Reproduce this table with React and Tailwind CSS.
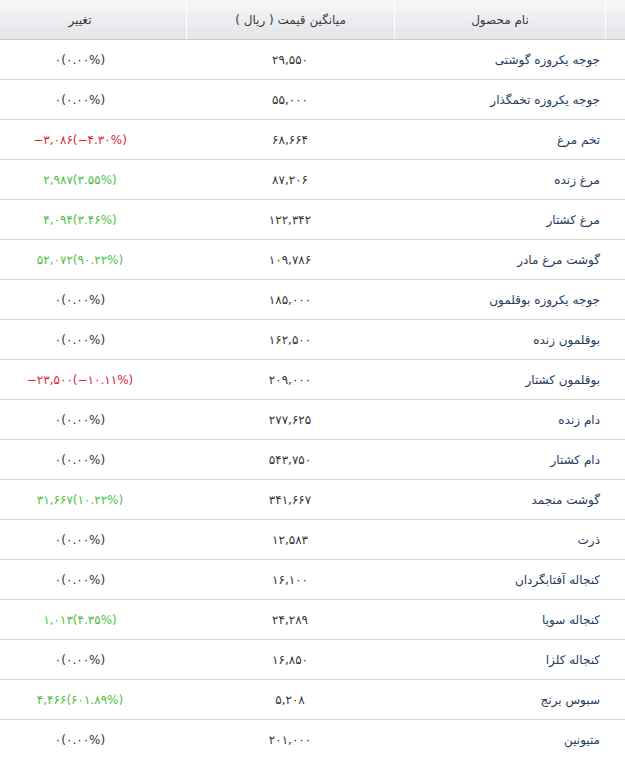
import React from 'react';

const rows = [
  ['جوجه یکروزه گوشتی', '۲۹,۵۵۰', '۰(۰.۰۰%)', 0],
  ['جوجه یکروزه تخمگذار', '۵۵,۰۰۰', '۰(۰.۰۰%)', 0],
  ['تخم مرغ', '۶۸,۶۶۴', '−۳,۰۸۶(−۴.۳۰%)', -1],
  ['مرغ زنده', '۸۷,۲۰۶', '۲,۹۸۷(۳.۵۵%)', 1],
  ['مرغ کشتار', '۱۲۲,۳۴۲', '۴,۰۹۴(۳.۴۶%)', 1],
  ['گوشت مرغ مادر', '۱۰۹,۷۸۶', '۵۲,۰۷۲(۹۰.۲۲%)', 1],
  ['جوجه یکروزه بوقلمون', '۱۸۵,۰۰۰', '۰(۰.۰۰%)', 0],
  ['بوقلمون زنده', '۱۶۲,۵۰۰', '۰(۰.۰۰%)', 0],
  ['بوقلمون کشتار', '۲۰۹,۰۰۰', '−۲۳,۵۰۰(−۱۰.۱۱%)', -1],
  ['دام زنده', '۲۷۷,۶۲۵', '۰(۰.۰۰%)', 0],
  ['دام کشتار', '۵۴۳,۷۵۰', '۰(۰.۰۰%)', 0],
  ['گوشت منجمد', '۳۴۱,۶۶۷', '۳۱,۶۶۷(۱۰.۲۲%)', 1],
  ['ذرت', '۱۲,۵۸۳', '۰(۰.۰۰%)', 0],
  ['کنجاله آفتابگردان', '۱۶,۱۰۰', '۰(۰.۰۰%)', 0],
  ['کنجاله سویا', '۲۴,۲۸۹', '۱,۰۱۳(۴.۳۵%)', 1],
  ['کنجاله کلزا', '۱۶,۸۵۰', '۰(۰.۰۰%)', 0],
  ['سبوس برنج', '۵,۲۰۸', '۴,۴۶۶(۶۰۱.۸۹%)', 1],
  ['متیونین', '۲۰۱,۰۰۰', '۰(۰.۰۰%)', 0],
];

const changeColor = (d) => (d > 0 ? 'text-[#4cbf3f]' : d < 0 ? 'text-[#d9263d]' : 'text-[#333]');

export default function App() {
  return (
    <div dir="rtl" className="w-[625px] bg-white font-['DejaVu_Sans',sans-serif] text-[12px]">
      {/* header */}
      <div className="grid h-10 grid-cols-[20px_211px_208px_186px] border-b border-[#c9cacc] bg-gradient-to-b from-[#f5f6f8] to-[#e3e5e8] text-[#3a3a3a]">
        <div className="border-l border-white" />
        <div className="flex items-center justify-center border-l border-white">نام محصول</div>
        <div className="flex items-center justify-center border-l border-white">میانگین قیمت ( ریال )</div>
        <div className="flex items-center justify-center pr-[26px]">تغییر</div>
      </div>

      {/* rows */}
      {rows.map(([name, price, change, dir]) => (
        <div key={name} className="grid h-10 grid-cols-[231px_208px_186px] border-b border-[#d9d9d9]">
          <div className="flex items-center pr-[25px] text-[#263a5c]">{name}</div>
          <div className="flex items-center justify-center text-[#333]">{price}</div>
          <div className="flex items-center justify-center pr-[26px]">
            <span dir="ltr" className={changeColor(dir)}>{change}</span>
          </div>
        </div>
      ))}
    </div>
  );
}
